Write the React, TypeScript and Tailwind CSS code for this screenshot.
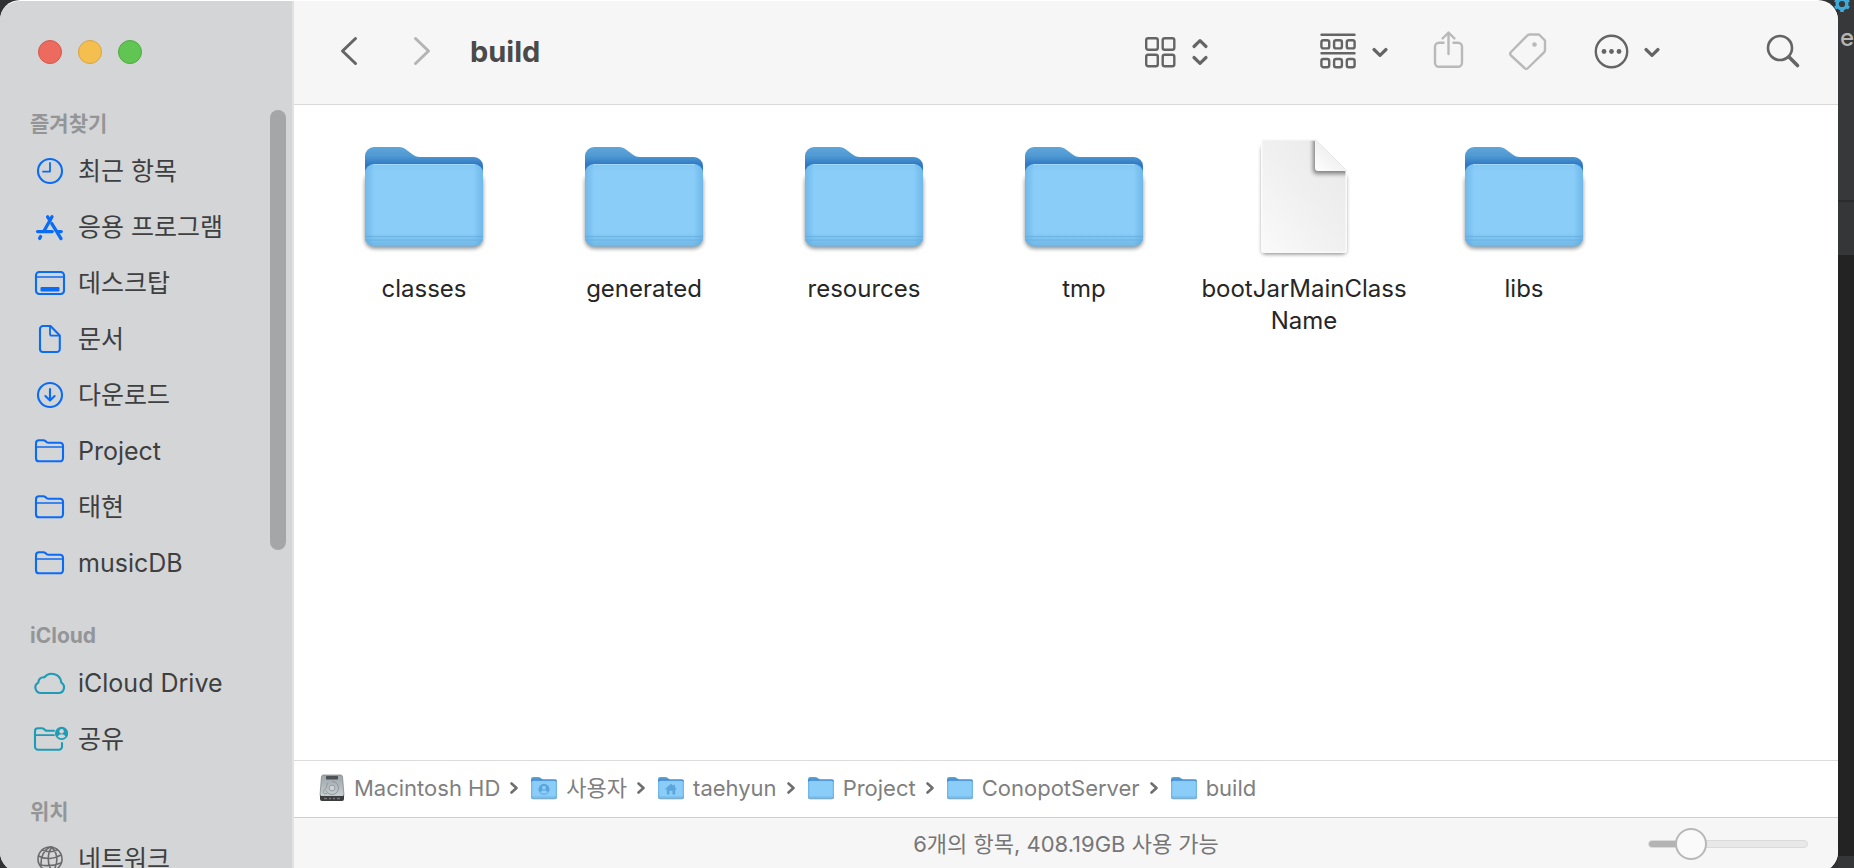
import { useState } from "react";
import type { ReactNode } from "react";

const BLUE = "text-[#0a6cf5]";
const TEAL = "text-[#1f9bb5]";

function Icon({ children, className }: { children: ReactNode; className: string }) {
  return (
    <svg
      viewBox="0 0 36 36"
      className={`size-9 shrink-0 ${className}`}
      fill="none"
      stroke="currentColor"
      strokeWidth="2.1"
      strokeLinecap="round"
      strokeLinejoin="round"
      aria-hidden="true"
    >
      {children}
    </svg>
  );
}

const ClockIcon = () => (
  <Icon className={BLUE}>
    <circle cx="18" cy="18" r="12" />
    <path d="M18 10v8.6h-7" strokeWidth="1.8" />
  </Icon>
);

const AppsIcon = () => (
  <Icon className={BLUE}>
    <g strokeWidth="3.3">
      <path d="M20 7.8 12 22" />
      <path d="M15.6 7.8 18 11.6" />
      <path d="M19.8 14.6 29 29.6" />
      <path d="M5.6 22.6h14.6" />
      <path d="M26 22.6h3.200" />
      <path d="m8.600 27.600-1 1.800" />
    </g>
  </Icon>
);

const DesktopIcon = () => (
  <Icon className={BLUE}>
    <rect x="4" y="7" width="28" height="22" rx="3.2" />
    <path d="M4 12h28" strokeWidth="1.6" />
    <rect x="8.5" y="22" width="19" height="4.4" rx="1" fill="currentColor" stroke="none" />
  </Icon>
);

const DocIcon = () => (
  <Icon className={BLUE}>
    <path d="M11 5h7.5l9.3 9.4V28a3 3 0 0 1-3 3H11a3 3 0 0 1-3-3V8a3 3 0 0 1 3-3z" />
    <path d="M18 5.5v7.2a2 2 0 0 0 2 2h7.3" strokeWidth="1.8" />
  </Icon>
);

const DownloadIcon = () => (
  <Icon className={BLUE}>
    <circle cx="18" cy="18" r="12" />
    <path d="M18 12v11.4m-4.6-4.3 4.6 4.5 4.6-4.5" />
  </Icon>
);

const FolderIcon = () => (
  <Icon className={BLUE}>
    <path d="M4 25.4V10.2a3 3 0 0 1 3-3h4.2c1 0 1.6.3 2.3.9l1 .9c.6.5 1.1.7 2 .7H28a3 3 0 0 1 3 3v12.6a3 3 0 0 1-3 3H7a3 3 0 0 1-3-2.9z" />
    <path d="M4 14h27" strokeWidth="1.7" />
  </Icon>
);

// wide and flat, with a small left bump and a large right one
const CloudIcon = () => (
  <Icon className={TEAL}>
    <path d="M9 28h17.500a5.600 5.600 0 0 0 2.800-10.400A9.600 9.600 0 0 0 12.300 12.400a4.900 4.900 0 0 0-5.900 5.200A5.500 5.500 0 0 0 9 28z" />
  </Icon>
);

const SharedIcon = () => (
  <Icon className={TEAL}>
    <path d="M22 9.8h-6.8c-.9 0-1.4-.2-2-.7l-1-.9c-.7-.6-1.3-.9-2.3-.9H6a3 3 0 0 0-3 3v15.400a3 3 0 0 0 3 3h21a3 3 0 0 0 3-3V22" />
    <path d="M3 14.2h19" strokeWidth="1.7" />
    <circle cx="29.6" cy="12.4" r="6.6" fill="currentColor" stroke="none" />
    <circle cx="29.6" cy="10.3" r="2.2" fill="#d4d5d7" stroke="none" />
    <path d="M25.6 15.6a4.6 4.6 0 0 1 8 0 6 6 0 0 1-8 0z" fill="#d4d5d7" stroke="none" />
  </Icon>
);

const GlobeIcon = () => (
  <Icon className="text-[#6b6b6c]">
    <g strokeWidth="1.6">
      <circle cx="18" cy="18" r="12" />
      <path d="M20 6c-5 6-5 17 0 24M19 6c6 4 8 14 3 23M18 6c-6 3-9 8-9 17M6.5 15c7 4 16 3 22.5-1M8 24c6 1 14 1 21-2M10 9c5 2 11 2 15 0" />
    </g>
  </Icon>
);

const sections = [
  {
    title: "즐겨찾기",
    items: [
      { name: "최근 항목", icon: ClockIcon },
      { name: "응용 프로그램", icon: AppsIcon },
      { name: "데스크탑", icon: DesktopIcon },
      { name: "문서", icon: DocIcon },
      { name: "다운로드", icon: DownloadIcon },
      { name: "Project", icon: FolderIcon },
      { name: "태현", icon: FolderIcon },
      { name: "musicDB", icon: FolderIcon },
    ],
  },
  {
    title: "iCloud",
    items: [
      { name: "iCloud Drive", icon: CloudIcon },
      { name: "공유", icon: SharedIcon },
    ],
  },
  {
    title: "위치",
    items: [{ name: "네트워크", icon: GlobeIcon }],
  },
];

const files = [
  { name: "classes", kind: "folder" },
  { name: "generated", kind: "folder" },
  { name: "resources", kind: "folder" },
  { name: "tmp", kind: "folder" },
  { name: "bootJarMainClassName", kind: "file" },
  { name: "libs", kind: "folder" },
];

const crumbs = [
  { name: "Macintosh HD", kind: "disk" },
  { name: "사용자", kind: "users" },
  { name: "taehyun", kind: "home" },
  { name: "Project", kind: "folder" },
  { name: "ConopotServer", kind: "folder" },
  { name: "build", kind: "folder" },
];

// gradients shared by every folder and file drawing
function Gradients() {
  return (
    <svg className="absolute size-0" aria-hidden="true">
      <defs>
        <linearGradient id="folderBack" x1="0" y1="0" x2="0" y2="1">
          <stop offset="0" stopColor="#5fa5d8" />
          <stop offset="0.1" stopColor="#4f99d2" />
          <stop offset="0.2" stopColor="#2f78c4" />
          <stop offset="1" stopColor="#2f78c4" />
        </linearGradient>
        <linearGradient id="folderFront" x1="0" y1="0" x2="0" y2="1">
          <stop offset="0" stopColor="#83c8f5" />
          <stop offset="0.1" stopColor="#8acdf8" />
          <stop offset="0.83" stopColor="#8acdf8" />
          <stop offset="1" stopColor="#6fb7e6" />
        </linearGradient>
        <linearGradient id="folderSides" x1="0" y1="0" x2="1" y2="0">
          <stop offset="0" stopColor="#4f9fd8" stopOpacity="0.45" />
          <stop offset="0.08" stopColor="#4f9fd8" stopOpacity="0" />
          <stop offset="0.92" stopColor="#4f9fd8" stopOpacity="0" />
          <stop offset="1" stopColor="#4f9fd8" stopOpacity="0.45" />
        </linearGradient>
        <linearGradient id="page" x1="1" y1="0" x2="0" y2="1">
          <stop offset="0" stopColor="#e8e8e8" />
          <stop offset="0.5" stopColor="#f0f0f0" />
          <stop offset="1" stopColor="#fafafa" />
        </linearGradient>
        <linearGradient id="pageFold" x1="0" y1="1" x2="0.6" y2="0.3">
          <stop offset="0" stopColor="#ffffff" />
          <stop offset="1" stopColor="#ededed" />
        </linearGradient>
        <linearGradient id="disk" x1="0" y1="0" x2="0" y2="1">
          <stop offset="0" stopColor="#9da5aa" />
          <stop offset="1" stopColor="#c6cdd1" />
        </linearGradient>
        <filter id="soft" x="-20%" y="-20%" width="140%" height="140%">
          <feGaussianBlur stdDeviation="2" />
        </filter>
        <clipPath id="pageClip">
          <path d="M24 6h51l32 32v79a3 3 0 0 1-3 3H24a3 3 0 0 1-3-3V9a3 3 0 0 1 3-3z" />
        </clipPath>
      </defs>
    </svg>
  );
}

function FolderArt({ className, badge }: { className: string; badge?: string }) {
  return (
    <svg viewBox="0 0 128 128" className={`shrink-0 ${className}`} aria-hidden="true">
      <rect x="5" y="40" width="118" height="75.5" rx="9" fill="#000" opacity="0.45" filter="url(#soft)" />
      <path
        d="M5 23a9 9 0 0 1 9-9h25c3 0 5 1 7 2.5l6 4.500c2.500 2 4.500 3 8 3h54a9 9 0 0 1 9 9v70H5z"
        fill="url(#folderBack)"
      />
      <rect x="5" y="31" width="118" height="82.5" rx="9" fill="url(#folderFront)" />
      <rect x="5" y="31" width="118" height="82.5" rx="9" fill="url(#folderSides)" />
      <path d="M5 103.5h118M5 107h118" stroke="#62acdd" strokeWidth="1" opacity="0.7" />
      <path d="M13 31.5h102" stroke="#a3dafb" strokeWidth="1" />
      {badge === "users" && (
        <g>
          <circle cx="64" cy="70" r="25" fill="#5ba5dc" />
          <circle cx="64" cy="63" r="9" fill="#8acdf8" />
          <path d="M47 84c4-12 30-12 34 0-8 9-26 9-34 0z" fill="#8acdf8" />
        </g>
      )}
      {badge === "home" && (
        <path
          d="M64 44 37 68l4 4 4-3v25h12V76h14v18h12V69l4 3 4-4-9-8V49h-7v5z"
          fill="#5ba5dc"
        />
      )}
    </svg>
  );
}

function FileArt() {
  return (
    <svg viewBox="0 0 128 128" className="size-32 shrink-0" aria-hidden="true">
      <path
        d="M22 14h54l30 30v74a3 3 0 0 1-3 3H25a3 3 0 0 1-3-3z"
        fill="#000"
        opacity="0.5"
        filter="url(#soft)"
      />
      <path
        d="M24 6h51l32 32v79a3 3 0 0 1-3 3H24a3 3 0 0 1-3-3V9a3 3 0 0 1 3-3z"
        fill="url(#page)"
      />
      <g clipPath="url(#pageClip)">
        <path d="M73 4v33a4 4 0 0 0 4 4h32V30z" fill="#000" opacity="0.45" filter="url(#soft)" />
        <path
          d="M24 6h51l32 32v79a3 3 0 0 1-3 3H24a3 3 0 0 1-3-3V9a3 3 0 0 1 3-3z"
          fill="none"
          stroke="#fafafa"
          strokeWidth="3"
        />
      </g>
      <path d="M75 6v29a3 3 0 0 0 3 3h29z" fill="url(#pageFold)" />
    </svg>
  );
}

function DiskArt() {
  return (
    <svg viewBox="0 0 28 28" className="size-7 shrink-0" aria-hidden="true">
      <path
        d="M3.5 2.5A2 2 0 0 1 5.500 1h17a2 2 0 0 1 2 1.500L26 21.500H2z"
        fill="url(#disk)"
        stroke="#767c80"
        strokeWidth="0.7"
      />
      <path d="M2 21.500h24V25a2 2 0 0 1-2 2H4a2 2 0 0 1-2-2z" fill="#3a3c3e" />
      <path d="M3 21.500h22" stroke="#dfe3e5" strokeWidth="0.8" />
      <path d="M6 24.500h3m2 0h2m2 0h2m2 0h3" stroke="#77797b" strokeWidth="1.400" />
      <rect x="8" y="2" width="12" height="3.400" rx="0.600" fill="#4c5256" />
      <path
        d="M14 7.500a6.500 6.500 0 1 1-6 9M9 19.500c-4 1-5-2-2-4 2-1.500 1-4 3-6.500"
        fill="none"
        stroke="#8a9195"
        strokeWidth="0.900"
      />
      <circle cx="14" cy="14" r="2.900" fill="#cdd3d6" stroke="#8a9195" strokeWidth="0.800" />
    </svg>
  );
}

function ToolIcon({ width, className, children }: { width: number; className: string; children: ReactNode }) {
  return (
    <svg
      viewBox={`0 0 ${width} 44`}
      width={width}
      height="44"
      className={className}
      fill="none"
      stroke="currentColor"
      strokeWidth="2.4"
      strokeLinecap="round"
      strokeLinejoin="round"
      aria-hidden="true"
    >
      {children}
    </svg>
  );
}

function Toolbar() {
  return (
    <header className="flex h-26 shrink-0 items-center border-b border-[#d9d9d9] bg-[#f6f6f6] pb-px pl-10 pr-9">
      <button type="button" aria-label="뒤로">
        <ToolIcon width={32} className="text-[#656565]">
          <path d="M21.5 8.500 8.500 21l13 12.500" strokeWidth="3" />
        </ToolIcon>
      </button>
      <button type="button" aria-label="앞으로" className="ml-10">
        <ToolIcon width={32} className="text-[#b4b4b4]">
          <path d="M9.500 8.500 22.500 21l-13 12.500" strokeWidth="3" />
        </ToolIcon>
      </button>
      <h1 className="ml-8 text-[29px] font-bold leading-9 text-[#4a4a4a]">build</h1>

      <div className="ml-auto flex items-center">
        <button type="button" aria-label="보기">
          <ToolIcon width={68} className="text-[#656565]">
            <rect x="2.2" y="8.2" width="11.6" height="11.6" rx="2" />
            <rect x="18.7" y="8.2" width="11.6" height="11.6" rx="2" />
            <rect x="2.2" y="24.7" width="11.6" height="11.6" rx="2" />
            <rect x="18.7" y="24.7" width="11.6" height="11.6" rx="2" />
            <path d="m50 16.500 6-5.800 6 5.800M50 27.500l6 5.800 6-5.800" strokeWidth="3.2" />
          </ToolIcon>
        </button>
        <button type="button" aria-label="그룹" className="ml-27">
          <ToolIcon width={72} className="text-[#656565]">
            <path d="M1.500 4.700h33M1.500 23.300h33" />
            <rect x="1.4" y="10.2" width="7.8" height="8.2" rx="2" />
            <rect x="14.1" y="10.2" width="7.8" height="8.2" rx="2" />
            <rect x="26.8" y="10.2" width="7.8" height="8.2" rx="2" />
            <rect x="1.4" y="29" width="7.8" height="8.2" rx="2" />
            <rect x="14.1" y="29" width="7.8" height="8.2" rx="2" />
            <rect x="26.8" y="29" width="7.8" height="8.2" rx="2" />
            <path d="m54 19.500 6 5.800 6-5.800" strokeWidth="3.2" />
          </ToolIcon>
        </button>
        <button type="button" aria-label="공유" className="ml-10">
          <ToolIcon width={36} className="text-[#b9b9b9]">
            <path d="M11.500 12.700H7a4 4 0 0 0-4 4v16a4 4 0 0 0 4 4h19a4 4 0 0 0 4-4v-16a4 4 0 0 0-4-4h-4.500" />
            <path d="M16.500 24V3m-6 5.500 6-6 6 6" />
          </ToolIcon>
        </button>
        <button type="button" aria-label="태그" className="ml-10">
          <ToolIcon width={40} className="text-[#b9b9b9]">
            <path d="M21.500 4.500H31l6 6V20c0 1-.3 1.600-1 2.300L20 38c-1.200 1.200-2.300 1.200-3.500 0L3 25.500c-1.200-1.200-1.200-2.300 0-3.500L19 5.800c.8-.8 1.500-1.300 2.500-1.300z" />
            <circle cx="26.5" cy="14.5" r="2.3" fill="currentColor" stroke="none" />
          </ToolIcon>
        </button>
        <button type="button" aria-label="동작" className="ml-11">
          <ToolIcon width={70} className="text-[#656565]">
            <circle cx="19.5" cy="21.5" r="15.7" />
            <g fill="currentColor" stroke="none">
              <circle cx="12" cy="21.5" r="2.4" />
              <circle cx="19.5" cy="21.5" r="2.4" />
              <circle cx="27" cy="21.5" r="2.4" />
            </g>
            <path d="m54 19.500 6 5.800 6-5.800" strokeWidth="3.2" />
          </ToolIcon>
        </button>
        <button type="button" aria-label="검색" className="ml-26">
          <ToolIcon width={36} className="text-[#656565]">
            <circle cx="14" cy="18" r="12" strokeWidth="2.6" />
            <path d="m23 27 8.500 8.500" strokeWidth="3.6" />
          </ToolIcon>
        </button>
      </div>
    </header>
  );
}

function Sidebar() {
  return (
    <aside className="relative flex w-[294px] shrink-0 flex-col border-r-2 border-[#e2e2e2] bg-[#d4d5d7]">
      <div className="flex h-26 shrink-0 items-center gap-4 pb-0.5 pl-[38px]">
        <button type="button" aria-label="닫기" className="size-6 rounded-full border border-[#d5574c] bg-[#ec6a5e]" />
        <button type="button" aria-label="최소화" className="size-6 rounded-full border border-[#d8a340] bg-[#f5bf4f]" />
        <button type="button" aria-label="확대" className="size-6 rounded-full border border-[#4dab3d] bg-[#61c554]" />
      </div>
      <nav className="flex flex-col gap-[26px]">
        {sections.map((section) => (
          <section key={section.title}>
            <h2 className="flex h-[38px] items-center pl-[30px] text-[21px] font-bold leading-7 text-[#949597]">
              {section.title}
            </h2>
            <ul>
              {section.items.map((item) => (
                <li key={item.name}>
                  <a href="#" className="flex h-14 items-center gap-2.5 pl-8 text-[25px] leading-8 text-[#3e3f40]">
                    <item.icon />
                    {item.name}
                  </a>
                </li>
              ))}
            </ul>
          </section>
        ))}
      </nav>
      {/* scrollbar thumb, floats over the list */}
      <div className="absolute right-1.5 top-[109px] h-110 w-4 rounded-full bg-[#a5a6a8]" />
    </aside>
  );
}

function PathBar() {
  return (
    <nav
      aria-label="경로"
      className="flex h-[57px] shrink-0 items-center border-t border-[#dcdcdc] bg-white pb-0.5 pl-6 text-[22px] leading-7 text-[#7f7f7f]"
    >
      {crumbs.map((crumb, i) => (
        <div key={crumb.name} className="flex items-center">
          {i > 0 && (
            <svg
              viewBox="0 0 8 14"
              className="ml-2.5 mr-3 h-3.5 w-2"
              fill="none"
              stroke="#6f6f6f"
              strokeWidth="2.6"
              strokeLinecap="round"
              strokeLinejoin="round"
              aria-hidden="true"
            >
              <path d="m1.500 2.500 5 4.500-5 4.500" />
            </svg>
          )}
          <a href="#" className="flex items-center gap-2">
            {crumb.kind === "disk" ? <DiskArt /> : <FolderArt className="size-7" badge={crumb.kind} />}
            {crumb.name}
          </a>
        </div>
      ))}
    </nav>
  );
}

function StatusBar() {
  const [size, setSize] = useState(21);

  return (
    <footer className="grid h-[55px] shrink-0 grid-cols-[1fr_auto_1fr] items-center border-t border-[#cfcfcf] bg-[#f6f6f6] pb-0.5">
      <p className="col-start-2 text-[22px] leading-7 text-[#767676]">6개의 항목, 408.19GB 사용 가능</p>
      <div className="relative mr-[30px] flex h-8 w-40 items-center justify-self-end">
        <div className="h-2 w-full overflow-hidden rounded-full border border-[#dadada] bg-[#e8e8e8]">
          <div className="h-full bg-[#b4b4b4]" style={{ width: `${size + 4}%` }} />
        </div>
        <input
          type="range"
          aria-label="아이콘 크기"
          value={size}
          onChange={(e) => setSize(Number(e.target.value))}
          className="absolute inset-0 w-full appearance-none bg-transparent [&::-webkit-slider-thumb]:size-8 [&::-webkit-slider-thumb]:appearance-none [&::-webkit-slider-thumb]:rounded-full [&::-webkit-slider-thumb]:border-2 [&::-webkit-slider-thumb]:border-[#b8b8b8] [&::-webkit-slider-thumb]:bg-[#fafafa]"
        />
      </div>
    </footer>
  );
}

// the editor window that shows behind the right edge
function Backdrop() {
  return (
    <div className="flex min-w-0 flex-1 flex-col overflow-hidden bg-[#232323]">
      <div className="h-[200px] shrink-0 bg-[#36383a] pt-[22px]">
        <div className="pl-0.5 text-[24px] font-medium leading-8 text-[#b4b5b6]">e</div>
      </div>
      <div className="h-[55px] shrink-0 border-t-2 border-[#2a2b2c] bg-[#343638]" />
      <div className="flex-1" />
      <div className="h-3 shrink-0 bg-[#343638]" />
    </div>
  );
}

export default function App() {
  return (
    <div className="relative flex h-screen overflow-hidden bg-[#2f3133] font-['Inter','Noto_Sans_CJK_KR',sans-serif]">
      <Gradients />
      <div className="flex h-[calc(100vh+4px)] w-[calc(100%-16px)] shrink-0 overflow-hidden rounded-[20px] border-t border-white/60 bg-white">
        <Sidebar />
        <div className="flex min-w-0 flex-1 flex-col">
          <Toolbar />
          <main className="flex-1 pl-5 pt-7">
            <ul className="flex flex-wrap">
              {files.map((file) => (
                <li key={file.name} className="flex w-55 flex-col items-center">
                  {file.kind === "folder" ? <FolderArt className="size-32" /> : <FileArt />}
                  <span className="mt-3 max-w-52 break-all text-center text-[24px] leading-8 text-[#262626]">
                    {file.name}
                  </span>
                </li>
              ))}
            </ul>
          </main>
          <PathBar />
          <StatusBar />
        </div>
      </div>
      <Backdrop />
      <svg viewBox="0 0 24 24" className="absolute -top-2 right-0 size-6" aria-hidden="true">
        <circle cx="12" cy="12" r="4.8" fill="none" stroke="#3fa9d8" strokeWidth="3.4" />
        <path
          d="M12 4v2.500M12 17.500V20M5 8l2.200 1.300M16.800 14.700 19 16M5 16l2.200-1.300M16.800 9.300 19 8"
          stroke="#3fa9d8"
          strokeWidth="3.6"
        />
      </svg>
    </div>
  );
}
